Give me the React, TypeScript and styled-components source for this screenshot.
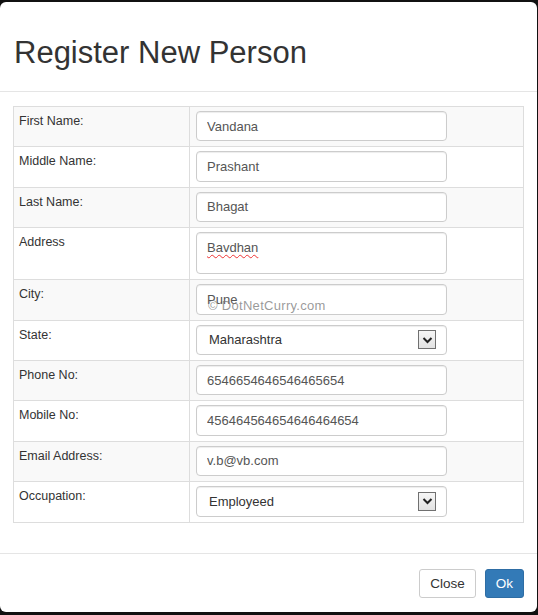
import styled, { createGlobalStyle } from "styled-components";

const GlobalStyle = createGlobalStyle`
  html, body {
    margin: 0;
    padding: 0;
    background: #111;
  }
  body {
    font-family: "Liberation Sans", Arial, sans-serif;
    color: #333;
  }
`;

type Field = {
  label: string;
  value: string;
  kind: "input" | "textarea" | "select";
};

const fields: Field[] = [
  { label: "First Name:", value: "Vandana", kind: "input" },
  { label: "Middle Name:", value: "Prashant", kind: "input" },
  { label: "Last Name:", value: "Bhagat", kind: "input" },
  { label: "Address", value: "Bavdhan", kind: "textarea" },
  { label: "City:", value: "Pune", kind: "input" },
  { label: "State:", value: "Maharashtra", kind: "select" },
  { label: "Phone No:", value: "6546654646546465654", kind: "input" },
  { label: "Mobile No:", value: "456464564654646464654", kind: "input" },
  { label: "Email Address:", value: "v.b@vb.com", kind: "input" },
  { label: "Occupation:", value: "Employeed", kind: "select" },
];

const Chevron = () => (
  <svg width="11" height="8" viewBox="0 0 11 8">
    <path d="M1.5 2 L5.5 6 L9.5 2" fill="none" stroke="#222" strokeWidth="2" />
  </svg>
);

const renderControl = (field: Field) => {
  if (field.kind === "textarea") {
    return (
      <TextAreaBox>
        <Misspelled>{field.value}</Misspelled>
      </TextAreaBox>
    );
  }
  if (field.kind === "select") {
    return (
      <SelectBox>
        <SelectText>{field.value}</SelectText>
        <ArrowBox>
          <Chevron />
        </ArrowBox>
      </SelectBox>
    );
  }
  return <Input type="text" defaultValue={field.value} />;
};

export default function App() {
  return (
    <>
      <GlobalStyle />
      <Modal>
        <Header>
          <Title>Register New Person</Title>
        </Header>
        <Body>
          <Table>
            <tbody>
              {fields.map((field, index) => (
                <Row key={field.label} $striped={index % 2 === 0}>
                  <LabelCell>{field.label}</LabelCell>
                  <ControlCell>{renderControl(field)}</ControlCell>
                </Row>
              ))}
            </tbody>
          </Table>
          <Watermark>© DotNetCurry.com</Watermark>
        </Body>
        <Footer>
          <Button>Close</Button>
          <Button $primary>Ok</Button>
        </Footer>
      </Modal>
    </>
  );
}

const Modal = styled.div`
  margin: 2px 1px 3px 0;
  background: #fff;
  border-radius: 6px;
  overflow: hidden;
`;

const Header = styled.div`
  padding: 31px 14px 18px;
  border-bottom: 1px solid #e5e5e5;
`;

const Title = styled.h3`
  margin: 0;
  font-size: 31px;
  font-weight: 400;
  line-height: 40px;
  color: #333;
`;

const Body = styled.div`
  position: relative;
  padding: 14px 14px 30px 13px;
`;

const Table = styled.table`
  width: 511px;
  border-collapse: collapse;
  border: 1px solid #ddd;
`;

const Row = styled.tr<{ $striped: boolean }>`
  background: ${({ $striped }) => ($striped ? "#f9f9f9" : "#fff")};
`;

const LabelCell = styled.td`
  width: 165px;
  padding: 5px 5px;
  border: 1px solid #ddd;
  vertical-align: top;
  font-size: 12.5px;
  line-height: 18px;
  color: #333;
`;

const ControlCell = styled.td`
  padding: 4px 6px 5px;
  border: 1px solid #ddd;
  vertical-align: top;
`;

const controlBase = `
  box-sizing: border-box;
  width: 251px;
  border: 1px solid #ccc;
  border-radius: 4px;
  background: #fff;
  font-family: "Liberation Sans", Arial, sans-serif;
  font-size: 13px;
  color: #555;
  box-shadow: inset 0 1px 1px rgba(0, 0, 0, 0.075);
`;

const Input = styled.input`
  ${controlBase}
  display: block;
  height: 30.4px;
  padding: 6px 10px;
  outline: none;
`;

const TextAreaBox = styled.div`
  ${controlBase}
  height: 42px;
  padding: 7px 10px;
  line-height: 16px;
`;

const Misspelled = styled.span`
  text-decoration: underline wavy #e33;
  text-decoration-thickness: 1px;
  text-underline-offset: 2px;
`;

const SelectBox = styled.div`
  ${controlBase}
  display: flex;
  align-items: center;
  justify-content: space-between;
  height: 30.4px;
  padding: 0 10px 0 12px;
`;

const SelectText = styled.span`
  color: #333;
`;

const ArrowBox = styled.span`
  display: flex;
  align-items: center;
  justify-content: center;
  width: 16px;
  height: 17px;
  border: 1px solid #707070;
  background: linear-gradient(#f6f6f6, #e2e2e2);
`;

const Watermark = styled.div`
  position: absolute;
  left: 208px;
  top: 206px;
  font-size: 13px;
  letter-spacing: 0.3px;
  color: rgba(120, 120, 120, 0.75);
  pointer-events: none;
`;

const Footer = styled.div`
  display: flex;
  justify-content: flex-end;
  gap: 9px;
  padding: 15px 13px 14px;
  border-top: 1px solid #e5e5e5;
`;

const Button = styled.button<{ $primary?: boolean }>`
  height: 29px;
  padding: 5px 10px;
  border-radius: 3px;
  border: 1px solid ${({ $primary }) => ($primary ? "#2e6da4" : "#ccc")};
  background: ${({ $primary }) => ($primary ? "#337ab7" : "#fff")};
  color: ${({ $primary }) => ($primary ? "#fff" : "#333")};
  font-family: "Liberation Sans", Arial, sans-serif;
  font-size: 13.5px;
  line-height: 17px;
`;
